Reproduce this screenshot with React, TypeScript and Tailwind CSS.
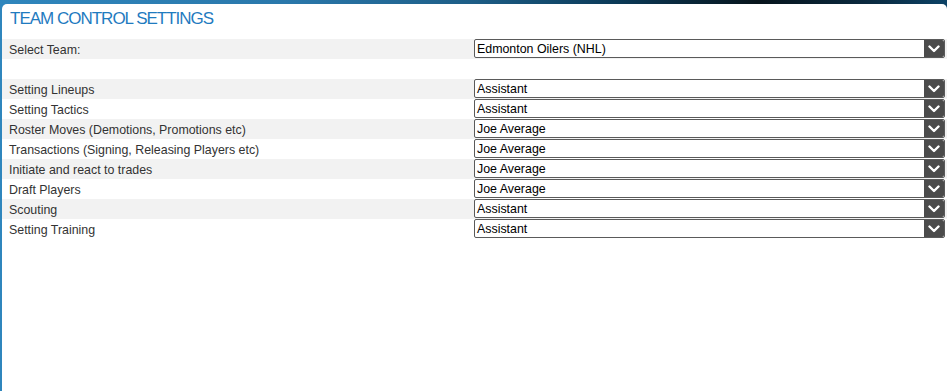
import React from "react";

const rows: { label: string; value: string }[] = [
  { label: "Setting Lineups", value: "Assistant" },
  { label: "Setting Tactics", value: "Assistant" },
  { label: "Roster Moves (Demotions, Promotions etc)", value: "Joe Average" },
  { label: "Transactions (Signing, Releasing Players etc)", value: "Joe Average" },
  { label: "Initiate and react to trades", value: "Joe Average" },
  { label: "Draft Players", value: "Joe Average" },
  { label: "Scouting", value: "Assistant" },
  { label: "Setting Training", value: "Assistant" },
];

function Chevron() {
  return (
    <svg width="12" height="8" viewBox="0 0 12 8">
      <polyline points="1.5,1.5 6,6 10.5,1.5" fill="none" stroke="#fff" strokeWidth="2.4" strokeLinecap="round" strokeLinejoin="round" />
    </svg>
  );
}

function Select({ value }: { value: string }) {
  return (
    <div className="flex h-[19px] w-full items-stretch rounded-[2px] border border-[#5a5a5a] bg-white">
      <div className="flex flex-1 items-center pl-[2px] pt-[2px] text-[12.4px] leading-none text-black">{value}</div>
      <div className="flex w-[20px] items-center justify-center rounded-r-[2px] bg-[#4b4b4b]">
        <Chevron />
      </div>
    </div>
  );
}

function Row({ label, value, gray }: { label: string; value: string; gray: boolean }) {
  return (
    <div className={`flex h-[20px] ${gray ? "bg-[#f2f2f2]" : "bg-white"}`}>
      <div className="flex w-[472px] items-center pl-[7px] pt-[2px] text-[12.4px] leading-none text-[#333]">{label}</div>
      <div className="flex w-[471px] items-start">
        <Select value={value} />
      </div>
    </div>
  );
}

export default function App() {
  return (
    <div
      className="h-[391px] w-[947px] overflow-hidden bg-[linear-gradient(to_right,#2f86bd_0%,#2a78ab_30%,#1d5d86_50%,#0b3a58_65%,#07141c_80%,#0a2a40_92%,#0c4266_100%)] pl-[2px] pt-[4px]"
      style={{ fontFamily: '"Liberation Sans", Arial, sans-serif' }}
    >
      <div className="h-full w-full overflow-hidden rounded-t-[5px] bg-white">
        <div className="h-[35px] pl-[8px] pt-[5px] text-[17px] leading-[20px] tracking-[-1px] text-[#1f7bbf]">TEAM CONTROL SETTINGS</div>
        <Row label="Select Team:" value="Edmonton Oilers (NHL)" gray={true} />
        <div className="h-[20px]" />
        {rows.map((r, i) => (
          <Row key={r.label} label={r.label} value={r.value} gray={i % 2 === 0} />
        ))}
      </div>
    </div>
  );
}
